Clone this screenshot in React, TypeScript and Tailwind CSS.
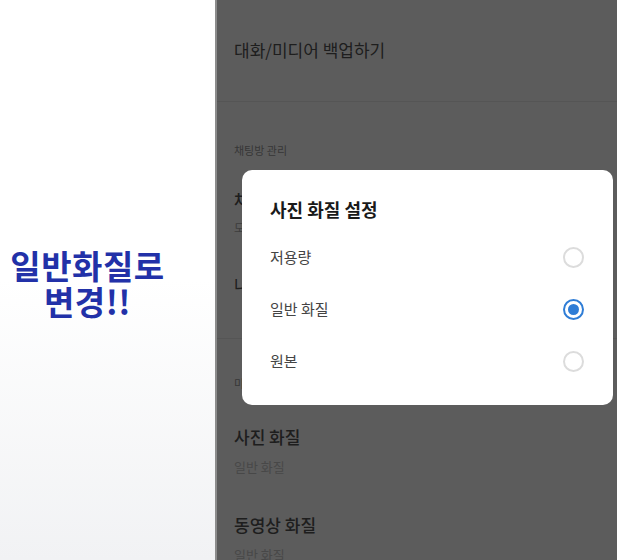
import React from 'react';

const font = { fontFamily: '"Noto Sans CJK KR", "Noto Sans", sans-serif' };

function Radio({ checked }: { checked?: boolean }) {
  if (checked) {
    return (
      <span className="w-[21px] h-[21px] rounded-full border-2 border-[#2f7dd6] flex items-center justify-center">
        <span className="w-[11px] h-[11px] rounded-full bg-[#2f7dd6]" />
      </span>
    );
  }
  return <span className="w-[21px] h-[21px] rounded-full border-2 border-[#dcdcdc]" />;
}

export default function App() {
  const options = [
    { label: '저용량', checked: false },
    { label: '일반 화질', checked: true },
    { label: '원본', checked: false },
  ];

  return (
    <div className="w-[617px] h-[560px] flex overflow-hidden" style={font}>
      {/* caption side */}
      <div className="w-[215px] h-full bg-gradient-to-b from-white via-white to-[#f1f2f4] flex flex-col items-center justify-center pt-[6px] pr-[40px]">
        <div className="text-[33px] font-bold leading-[36px] text-[#2231a8] text-center tracking-[0.5px] whitespace-nowrap">
          일반화질로
          <br />
          변경!!
        </div>
      </div>

      {/* phone screen */}
      <div className="relative flex-1 h-full bg-white border-l-2 border-[#8c8c8c]">
        <div className="px-[17px] text-[#555]">
          <div className="h-[101px] pt-[38px]">
            <div className="text-[17px] leading-6">대화/미디어 백업하기</div>
          </div>
          <div className="border-t border-[#ececec] -mx-[17px]" />

          <div className="h-[236px] pt-[40px]">
            <div className="text-[11px] leading-4 text-[#999]">채팅방 관리</div>
            <div className="mt-[30px] text-[17px] leading-6 font-medium">채팅방 배경화면</div>
            <div className="mt-[8px] text-[12px] leading-4 text-[#aaa]">모든 채팅방에 적용</div>
            <div className="mt-[37px] text-[17px] leading-6">나간 채팅방 보관</div>
          </div>
          <div className="border-t border-[#ececec] -mx-[17px]" />

          <div className="pt-[36px]">
            <div className="text-[11px] leading-4 text-[#999]">미디어</div>
            <div className="mt-[34px] text-[17px] leading-6 font-medium">사진 화질</div>
            <div className="mt-[10px] text-[13px] leading-4 text-[#c8c8c8]">일반 화질</div>
            <div className="mt-[38px] text-[17px] leading-6 font-medium">동영상 화질</div>
            <div className="mt-[10px] text-[13px] leading-4 text-[#c8c8c8]">일반 화질</div>
          </div>
        </div>

        {/* dim overlay */}
        <div className="absolute inset-0 bg-black/[0.64]" />

        {/* dialog */}
        <div className="absolute left-[25px] right-[4px] top-[170px] h-[235px] bg-white rounded-[10px] px-[28px] pt-[27px]">
          <div className="text-[18px] leading-6 font-bold text-[#1a1a1a]">사진 화질 설정</div>
          <div className="mt-[10px]">
            {options.map(o => (
              <div key={o.label} className="h-[52px] flex items-center justify-between pr-[1px]">
                <span className="text-[15px] text-[#444]">{o.label}</span>
                <Radio checked={o.checked} />
              </div>
            ))}
          </div>
        </div>
      </div>
    </div>
  );
}
